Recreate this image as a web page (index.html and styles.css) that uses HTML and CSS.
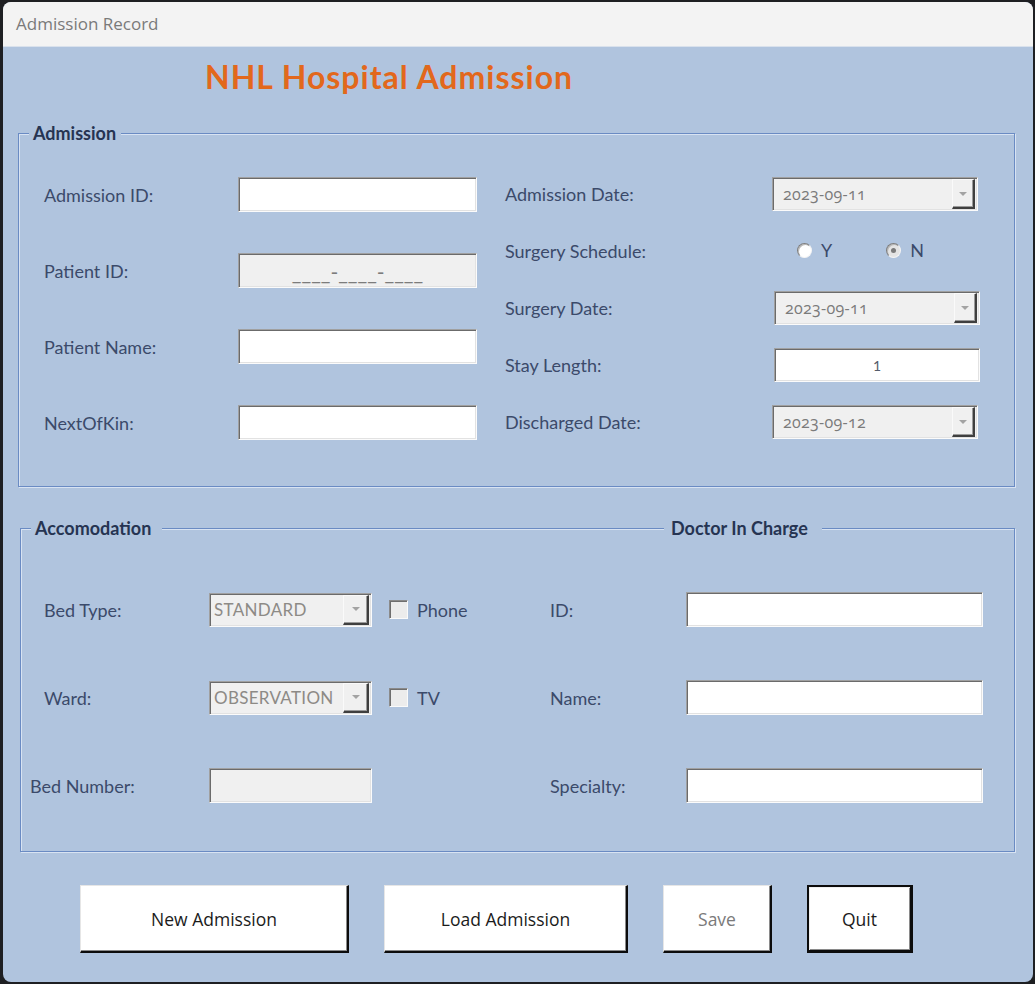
FILE: index.html
```html
<!DOCTYPE html>
<html lang="en">
<head>
<meta charset="utf-8">
<title>Admission Record</title>
<link rel="stylesheet" href="styles.css">
</head>
<body>
<div class="window">
  <div class="titlebar">Admission Record</div>
  <div class="form">
    <h1 class="heading">NHL Hospital Admission</h1>

    <fieldset class="frame frame-admission">
      <legend class="legend">Admission</legend>
      <div class="adm-cols">
        <div class="col-left">
          <div class="row row-l"><span class="label lw-194">Admission ID:</span><div class="field w-239"></div></div>
          <div class="row row-l"><span class="label lw-194">Patient ID:</span><div class="field gray w-239 mask">____-____-____</div></div>
          <div class="row row-l"><span class="label lw-194">Patient Name:</span><div class="field w-239"></div></div>
          <div class="row row-l"><span class="label lw-194">NextOfKin:</span><div class="field w-239"></div></div>
        </div>
        <div class="col-right">
          <div class="row row-r"><span class="label lw-267">Admission Date:</span><div class="combo date w-206"><span class="combo-text">2023-09-11</span><span class="dd"></span></div></div>
          <div class="row row-r"><span class="label lw-267">Surgery Schedule:</span>
            <div class="radios">
              <span class="radio-item"><span class="radio"></span><span class="opt">Y</span></span>
              <span class="radio-item"><span class="radio checked"></span><span class="opt">N</span></span>
            </div>
          </div>
          <div class="row row-r"><span class="label lw-267">Surgery Date:</span><div class="combo date w-206 shift"><span class="combo-text">2023-09-11</span><span class="dd"></span></div></div>
          <div class="row row-r"><span class="label lw-267">Stay Length:</span><div class="field w-206 shift num">1</div></div>
          <div class="row row-r"><span class="label lw-267">Discharged Date:</span><div class="combo date w-206"><span class="combo-text">2023-09-12</span><span class="dd"></span></div></div>
        </div>
      </div>
    </fieldset>

    <fieldset class="frame frame-accom">
      <legend class="legend legend-accom">Accomodation<span class="legend-extra">Doctor In Charge</span></legend>
      <div class="acc-cols">
        <div class="acc-left">
          <div class="row row-a">
            <span class="label lw-165">Bed Type:</span>
            <div class="combo w-163 list"><span class="combo-text">STANDARD</span><span class="dd"></span></div>
            <span class="check-item"><span class="checkbox"></span><span class="opt">Phone</span></span>
          </div>
          <div class="row row-a">
            <span class="label lw-165">Ward:</span>
            <div class="combo w-163 list"><span class="combo-text">OBSERVATION</span><span class="dd"></span></div>
            <span class="check-item"><span class="checkbox"></span><span class="opt">TV</span></span>
          </div>
          <div class="row row-a">
            <span class="label lw-165 pull">Bed Number:</span>
            <div class="field gray w-163"></div>
          </div>
        </div>
        <div class="acc-right">
          <div class="row row-a"><span class="label lw-136">ID:</span><div class="field w-297"></div></div>
          <div class="row row-a"><span class="label lw-136">Name:</span><div class="field w-297"></div></div>
          <div class="row row-a"><span class="label lw-136">Specialty:</span><div class="field w-297"></div></div>
        </div>
      </div>
    </fieldset>

    <div class="buttons">
      <button class="btn b-new" type="button">New Admission</button>
      <button class="btn b-load" type="button">Load Admission</button>
      <button class="btn b-save disabled" type="button">Save</button>
      <button class="btn b-quit default" type="button">Quit</button>
    </div>
  </div>
</div>
</body>
</html>
```

FILE: styles.css
```css
html, body {
  margin: 0;
  padding: 0;
  background: #1e1f22;
  width: 1035px;
  height: 984px;
  overflow: hidden;
}

.window {
  box-sizing: border-box;
  width: 1030px;
  height: 980px;
  margin: 2px 2px 2px 3px;
  border-radius: 8px;
  background: #b0c4de;
  overflow: hidden;
  display: flex;
  flex-direction: column;
}

.titlebar {
  height: 45px;
  flex: none;
  background: #f3f3f3;
  color: #7a7a7a;
  font-family: "Open Sans", "Noto Sans", sans-serif;
  font-size: 17px;
  line-height: 43px;
  padding-left: 13px;
  border-bottom: 1px solid #d9e1ec;
  box-sizing: border-box;
}

.form {
  padding: 10px 18px 0 15px;
  font-family: Lato, "Open Sans", sans-serif;
}

.heading {
  margin: 0 0 0 187px;
  height: 40px;
  line-height: 40px;
  font-family: Lato, "Open Sans", sans-serif;
  font-weight: 700;
  font-size: 32px;
  letter-spacing: 1px;
  color: #e2681c;
}

/* Etched frames */
.frame {
  margin: 26px 0 0 0;
  border: 1px solid #6a8bc3;
  box-shadow: inset 1px 1px 0 #d8e3f2, 1px 1px 0 #d8e3f2;
  min-width: 0;
}

.frame-admission {
  padding: 34px 0 46px 0;
}

.frame-accom {
  margin: 31px 0 0 2px;
  padding: 54px 0 48px 0;
}

.legend {
  margin-left: 10px;
  padding: 0 5px 0 4px;
  height: 20px;
  line-height: 20px;
  background: #b0c4de;
  color: #263452;
  font-weight: 700;
  font-size: 18px;
}

.legend-accom {
  position: relative;
  padding-right: 11px;
}

.legend-extra {
  position: absolute;
  left: 633px;
  top: 0;
  height: 20px;
  padding: 0 14px 0 7px;
  background: #b0c4de;
  white-space: nowrap;
}

/* Rows */
.row {
  display: flex;
  align-items: center;
}

.label {
  flex: none;
  color: #3b4a6a;
  font-size: 18px;
  white-space: nowrap;
}

.lw-194 { width: 194px; }
.lw-267 { width: 267px; }
.lw-165 { width: 165px; }
.lw-136 { width: 136px; }
.pull { margin-left: -14px; width: 179px; }

.w-239 { width: 239px; }
.w-206 { width: 206px; }
.w-163 { width: 163px; }
.w-297 { width: 297px; }
.shift { margin-left: 2px; }

.adm-cols {
  display: flex;
  gap: 28px;
  padding-left: 25px;
}

.col-left {
  display: flex;
  flex-direction: column;
  gap: 41px;
}
.row-l { height: 35px; }

.col-right {
  display: flex;
  flex-direction: column;
  gap: 23px;
}
.row-r { height: 34px; }

/* Sunken text box */
.field, .combo {
  box-sizing: border-box;
  height: 100%;
  background: #fff;
  border: 1px solid;
  border-color: #a0a0a0 #fbfbfb #fbfbfb #a0a0a0;
  box-shadow: inset 1px 1px 0 #6b6b6b, inset -1px -1px 0 #e2e2e2;
}

.field.gray { background: #f0f0f0; }

.mask {
  display: flex;
  align-items: center;
  justify-content: center;
  color: #7c7c7c;
  font-size: 21px;
  padding-top: 1px;
}

.num {
  display: flex;
  align-items: center;
  justify-content: center;
  color: #555c6b;
  font-size: 14px;
}

/* Combo box */
.combo {
  display: flex;
  align-items: stretch;
  background: #f0f0f0;
  padding: 1px 2px 1px 1px;
}

.combo-text {
  flex: 1;
  display: flex;
  align-items: center;
  overflow: hidden;
  white-space: nowrap;
}

.date .combo-text {
  padding-left: 9px;
  color: #7b7b7b;
  font-family: "Open Sans", Lato, sans-serif;
  font-size: 16px;
  font-variant-numeric: oldstyle-nums;
  font-feature-settings: "onum" 1;
  letter-spacing: 0.3px;
}

.list .combo-text {
  padding-left: 3px;
  color: #8d8a86;
  font-size: 17px;
  letter-spacing: 0.3px;
}

.dd {
  flex: none;
  width: 23px;
  box-sizing: border-box;
  background: #f0f0f0;
  border-style: solid;
  border-width: 1px 2px 2px 1px;
  border-color: #fafafa #3f3f3f #3f3f3f #fafafa;
  box-shadow: inset -1px -1px 0 #9a9a9a;
  display: flex;
  align-items: center;
  justify-content: center;
}

.dd::after {
  content: "";
  width: 0;
  height: 0;
  border-left: 4px solid transparent;
  border-right: 4px solid transparent;
  border-top: 4px solid #a3a3a3;
}

.list .dd { width: 26px; }

/* Radios */
.radios {
  display: flex;
  align-items: center;
  gap: 54px;
  padding-left: 25px;
  margin-top: -2px;
}

.radio-item, .check-item {
  display: flex;
  align-items: center;
  color: #3b4a6a;
  font-size: 18px;
}

.radio {
  box-sizing: border-box;
  width: 15px;
  height: 15px;
  border-radius: 50%;
  background: #fff;
  border: 1px solid;
  border-color: #7d7d7d #f4f4f4 #f4f4f4 #7d7d7d;
  box-shadow: inset 1px 1px 0 #b9b9b9;
  margin-right: 9px;
  display: flex;
  align-items: center;
  justify-content: center;
}

.radio.checked { background: #e4e4e4; }
.radio.checked::after {
  content: "";
  width: 5px;
  height: 5px;
  border-radius: 50%;
  background: #7a7a7a;
}

/* Accommodation frame */
.acc-cols {
  display: flex;
  padding-left: 23px;
}

.acc-left, .acc-right {
  display: flex;
  flex-direction: column;
  gap: 53px;
}

.acc-left { width: 506px; }

.row-a { height: 35px; }
.row-a .combo { height: 34px; }

.check-item { margin-left: 17px; }

.checkbox {
  box-sizing: border-box;
  width: 19px;
  height: 19px;
  background: #ececec;
  border: 1px solid;
  border-color: #8a8a8a #fafafa #fafafa #8a8a8a;
  box-shadow: inset 1px 1px 0 #6e6e6e;
  margin-right: 9px;
}

/* Buttons */
.buttons {
  display: flex;
  gap: 35px;
  margin: 33px 0 0 62px;
  height: 68px;
}

.btn {
  box-sizing: border-box;
  height: 68px;
  background: #fff;
  border-style: solid;
  border-width: 1px 2px 2px 1px;
  border-color: #e6e6e6 #0c0c0c #0c0c0c #e6e6e6;
  box-shadow: inset -1px -1px 0 #8a8a8a;
  font-family: "Open Sans", "Noto Sans", sans-serif;
  font-size: 17.5px;
  color: #1b1b1b;
  padding: 0;
}

.b-new { width: 269px; }
.b-load { width: 244px; }
.b-save { width: 109px; }
.b-quit { width: 106px; }

.btn.disabled { color: #7a7a7a; }

.btn.default {
  border-width: 2px 3px 3px 2px;
  border-color: #0c0c0c;
  box-shadow: inset 1px 1px 0 #f0f0f0, inset -1px -1px 0 #8a8a8a;
}
```
